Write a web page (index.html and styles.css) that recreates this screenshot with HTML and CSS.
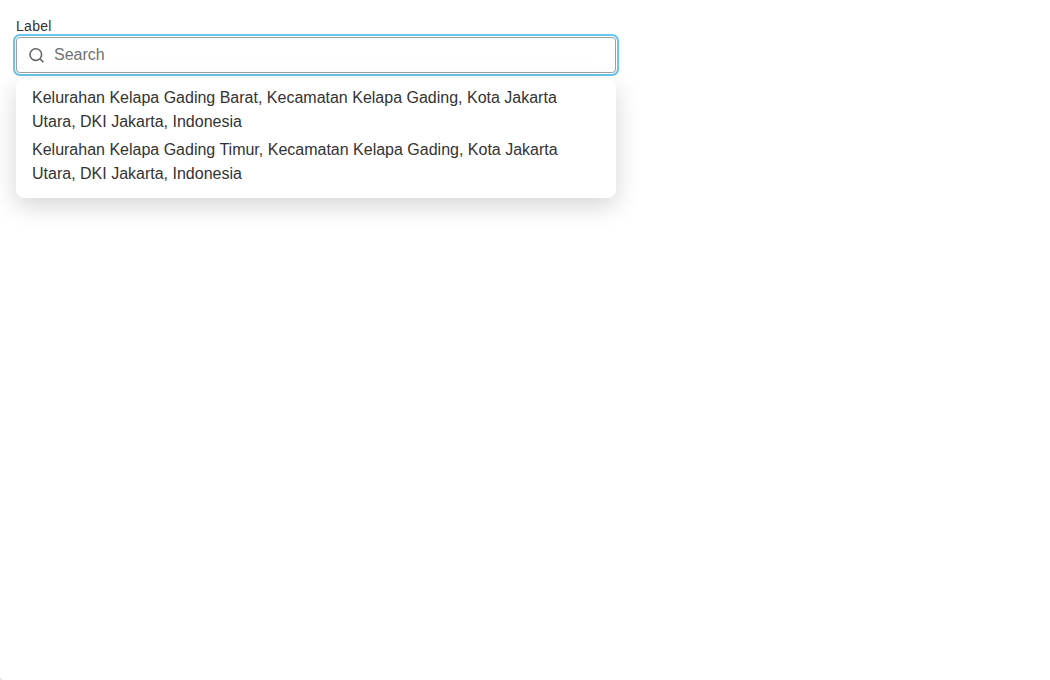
FILE: index.html
```html
<!DOCTYPE html>
<html lang="id">
<head>
<meta charset="utf-8">
<title>Search</title>
<link rel="stylesheet" href="styles.css">
</head>
<body>
<div class="field">
  <label class="label" for="search">Label</label>
  <div class="control">
    <svg class="icon" viewBox="0 0 16 16" aria-hidden="true"><circle cx="6.8" cy="7.6" r="5.8"/><path d="M10.9 11.7l3.4 3.4"/></svg>
    <input class="input" id="search" type="text" placeholder="Search">
  </div>
  <ul class="menu">
    <li class="option">Kelurahan Kelapa Gading Barat, Kecamatan Kelapa Gading, Kota Jakarta Utara, DKI Jakarta, Indonesia</li>
    <li class="option">Kelurahan Kelapa Gading Timur, Kecamatan Kelapa Gading, Kota Jakarta Utara, DKI Jakarta, Indonesia</li>
  </ul>
</div>
<span class="corner"></span>
</body>
</html>
```
FILE: styles.css
```css
* { box-sizing: border-box; }
html { background: #fff; }
body {
  min-height: 100vh;
  margin: 0;
  padding: 16px;
  color: #333;
  font-family: "Liberation Sans", Arial, sans-serif;
}
.field { width: 600px; }
.label {
  display: block;
  height: 21px;
  font-size: 14px;
  line-height: 20px;
  letter-spacing: 0.3px;
}
.control {
  display: flex;
  align-items: center;
  gap: 9px;
  height: 36px;
  padding: 0 12px;
  border: 1px solid #a0a0a0;
  border-radius: 4px;
  box-shadow: 0 0 0 1px #fff, 0 0 0 3px #68c5eb;
}
.icon {
  width: 16px;
  height: 16px;
  fill: none;
  stroke: #666;
  stroke-width: 1.6;
}
.input {
  flex: 1;
  padding: 0;
  border: 0;
  outline: 0;
  background: none;
  font: 16px/24px "Liberation Sans", Arial, sans-serif;
}
.input::placeholder { color: #717171; }
.menu {
  margin: 5px 0 0;
  padding: 6px 0 10px;
  list-style: none;
  background: #fff;
  border-radius: 8px;
  box-shadow: 0 8px 24px rgba(0, 0, 0, 0.17);
}
.option {
  padding: 2px 16px;
  font-size: 16px;
  line-height: 24px;
}
.corner {
  position: fixed;
  left: 0;
  bottom: 0;
  width: 2px;
  height: 2px;
  background: #e6e6e6;
  border-top-right-radius: 2px;
}
```
